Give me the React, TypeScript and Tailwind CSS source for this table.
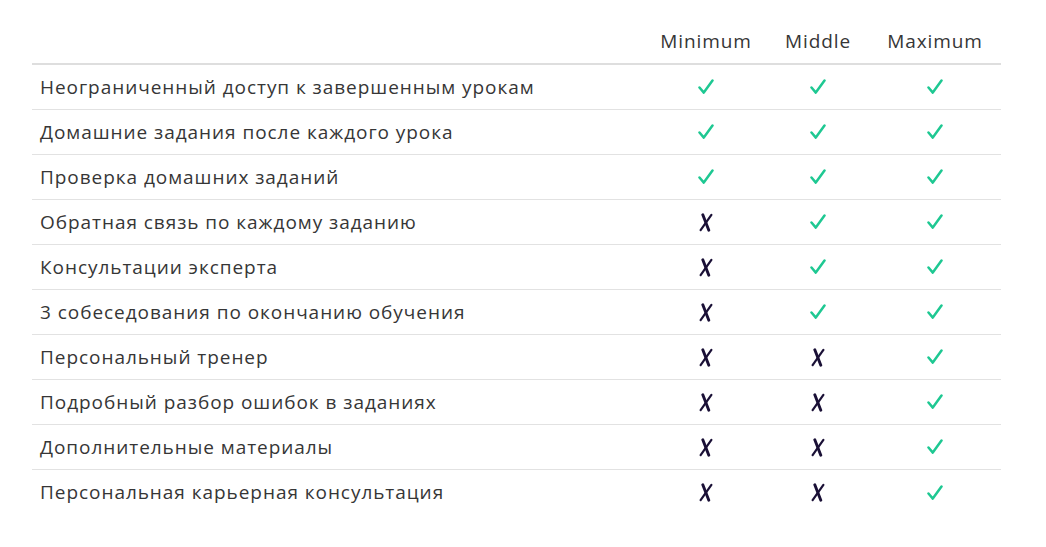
import React from "react";

const rows: [string, boolean, boolean, boolean][] = [
  ["Неограниченный доступ к завершенным урокам", true, true, true],
  ["Домашние задания после каждого урока", true, true, true],
  ["Проверка домашних заданий", true, true, true],
  ["Обратная связь по каждому заданию", false, true, true],
  ["Консультации эксперта", false, true, true],
  ["3 собеседования по окончанию обучения", false, true, true],
  ["Персональный тренер", false, false, true],
  ["Подробный разбор ошибок в заданиях", false, false, true],
  ["Дополнительные материалы", false, false, true],
  ["Персональная карьерная консультация", false, false, true],
];

function Mark({ ok }: { ok: boolean }) {
  return ok ? (
    <svg width="16" height="16" viewBox="0 0 16 16" className="inline-block">
      <path d="M1.5 8.5 L5.8 13.6 L14.5 1.5" fill="none" stroke="#1ec892" strokeWidth="2.5" strokeLinecap="round" strokeLinejoin="round" />
    </svg>
  ) : (
    <svg width="14" height="19" viewBox="0 0 14 19" className="inline-block">
      <path d="M3.8 1.8 L9.8 17.2" fill="none" stroke="#1a1036" strokeWidth="2.9" strokeLinecap="round" />
      <path d="M12.4 1.8 L1.6 17.2" fill="none" stroke="#1a1036" strokeWidth="2.2" strokeLinecap="round" />
    </svg>
  );
}

export default function App() {
  return (
    <div className="w-[1046px] h-[547px] bg-white pt-[29px] pl-[32px] pr-[45px] text-[#363636]" style={{ fontFamily: '"Open Sans", sans-serif' }}>
      <div className="flex h-[36px] items-center border-b-2 border-[#dedede] text-[19px] tracking-[0.9px] pb-[10px]">
        <div className="flex-1" />
        <div className="w-[110px] text-center">Minimum</div>
        <div className="w-[114px] text-center">Middle</div>
        <div className="w-[126px] text-center pr-[6px]">Maximum</div>
      </div>
      {rows.map((r, i) => (
        <div key={i} className={`flex h-[45px] items-center text-[19px] tracking-[0.95px] ${i < rows.length - 1 ? "border-b border-[#e2e2e2]" : ""}`}>
          <div className="flex-1 pl-[8px]">{r[0]}</div>
          <div className="w-[110px] flex justify-center"><Mark ok={r[1]} /></div>
          <div className="w-[114px] flex justify-center"><Mark ok={r[2]} /></div>
          <div className="w-[126px] flex justify-center pr-[6px]"><Mark ok={r[3]} /></div>
        </div>
      ))}
    </div>
  );
}
